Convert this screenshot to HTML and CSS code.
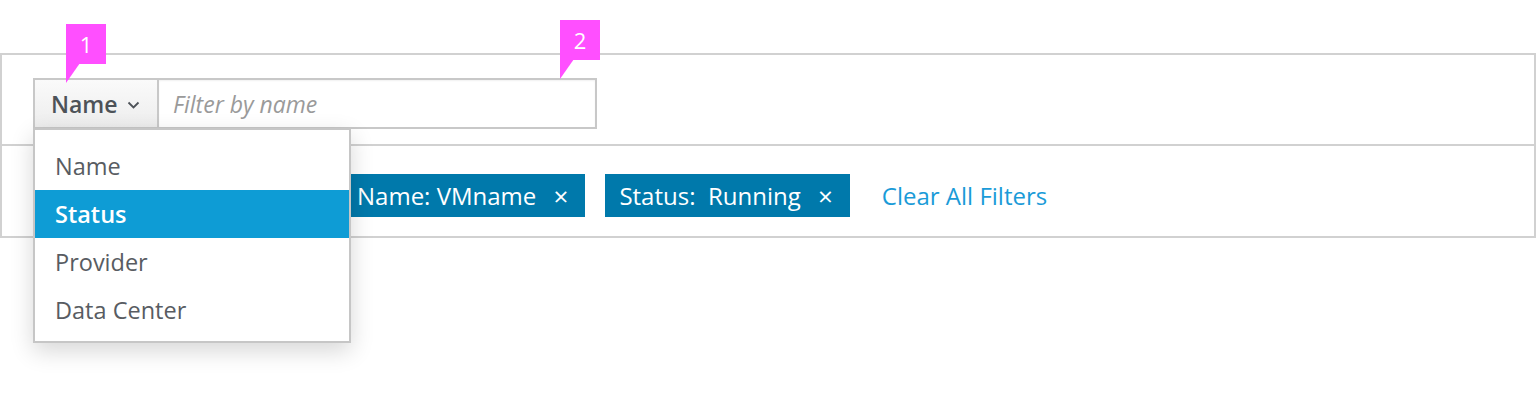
FILE: index.html
```html
<!DOCTYPE html>
<html lang="en">
<head>
  <meta charset="UTF-8" />
  <meta name="viewport" content="width=device-width, initial-scale=1.0"/>
  <title>Filter Toolbar</title>
  <link rel="stylesheet" href="styles.css">
</head>
<body>
  <div class="panel">
    <div class="toolbar">
      <div class="filter">
        <div class="dropdown">
          <button type="button" class="dropdown-toggle">
            Name
            <svg class="caret" width="13" height="8" viewBox="0 0 13 8">
              <path d="M1.5 1.5 L6.5 6.5 L11.5 1.5" fill="none" stroke="#4d5258" stroke-width="1.8"/>
            </svg>
          </button>
          <ul class="dropdown-menu">
            <li>Name</li>
            <li class="selected">Status</li>
            <li>Provider</li>
            <li>Data Center</li>
          </ul>
        </div>
        <input type="text" class="filter-input" placeholder="Filter by name">

        <svg class="marker marker-one" width="40" height="60" viewBox="0 0 40 60">
          <rect x="0" y="0" width="40" height="40" fill="#ff4fff"/>
          <polygon points="0,39 0,59 14,39" fill="#ff4fff"/>
          <text x="20" y="29" text-anchor="middle">1</text>
        </svg>
        <svg class="marker marker-two" width="40" height="60" viewBox="0 0 40 60">
          <rect x="0" y="0" width="40" height="40" fill="#ff4fff"/>
          <polygon points="0,39 0,59 14,39" fill="#ff4fff"/>
          <text x="20" y="29" text-anchor="middle">2</text>
        </svg>
      </div>
    </div>

    <div class="results">
      <span class="chip">Name: VMname <span class="close">&times;</span></span>
      <span class="chip">Status:&nbsp; Running <span class="close">&times;</span></span>
      <a href="#" class="clear-link">Clear All Filters</a>
    </div>
  </div>
</body>
</html>
```

FILE: styles.css
```css
html, body {
  height: 100%;
}
body {
  font-family: "Open Sans", "Liberation Sans", sans-serif;
  background: #fff;
  color: #4d5258;
  margin: 0;
  padding-top: 53px;
  box-sizing: border-box;
}
.panel {
  border: 2px solid #d1d1d1;
}
.toolbar {
  padding: 23px 31px 15px;
  border-bottom: 2px solid #d1d1d1;
}
.filter {
  position: relative;
  display: flex;
}
.dropdown {
  position: relative;
}
.dropdown-toggle {
  display: flex;
  align-items: center;
  gap: 9px;
  width: 126px;
  height: 51px;
  box-sizing: border-box;
  padding: 0 0 0 16px;
  font-family: inherit;
  font-size: 23px;
  font-weight: 600;
  color: #4d5258;
  background: linear-gradient(#fafafa, #ededed);
  border: 2px solid #c8c8c8;
  cursor: pointer;
}
.caret {
  margin-top: 3px;
}
.dropdown-menu {
  position: absolute;
  top: 50px;
  left: 0;
  z-index: 2;
  width: 318px;
  box-sizing: border-box;
  margin: 0;
  padding: 12px 0 7px;
  list-style: none;
  background: #fff;
  border: 2px solid #c6c6c6;
  box-shadow: 0 8px 22px rgba(0, 0, 0, 0.16);
}
.dropdown-menu li {
  height: 48px;
  line-height: 48px;
  padding-left: 20px;
  font-size: 23.5px;
  color: #585c62;
}
.dropdown-menu li.selected {
  background: #0e9cd5;
  color: #fff;
  font-weight: 600;
}
.filter-input {
  width: 440px;
  height: 51px;
  box-sizing: border-box;
  margin-left: -2px;
  padding: 0 14px;
  font-family: inherit;
  font-size: 23px;
  border: 2px solid #c8c8c8;
  box-shadow: inset 0 1px 2px rgba(0, 0, 0, 0.06);
  outline: none;
}
.filter-input::placeholder {
  color: #9a9a9a;
  font-style: italic;
}
.marker {
  position: absolute;
  z-index: 3;
}
.marker text {
  fill: #fff;
  font-family: "Open Sans", sans-serif;
  font-size: 22px;
}
.marker-one {
  left: 33px;
  top: -54px;
}
.marker-two {
  left: 527px;
  top: -58px;
}
.results {
  display: flex;
  align-items: center;
  padding: 28px 0 19px 341px;
}
.chip {
  display: flex;
  align-items: center;
  height: 43px;
  padding: 0 17px 0 14px;
  margin-right: 20px;
  background: #0079ab;
  color: #fff;
  font-size: 24px;
  white-space: pre;
}
.close {
  margin-left: 11px;
  font-size: 26px;
}
.clear-link {
  margin-left: 12px;
  color: #1a9bd8;
  font-size: 24px;
  text-decoration: none;
}
```
